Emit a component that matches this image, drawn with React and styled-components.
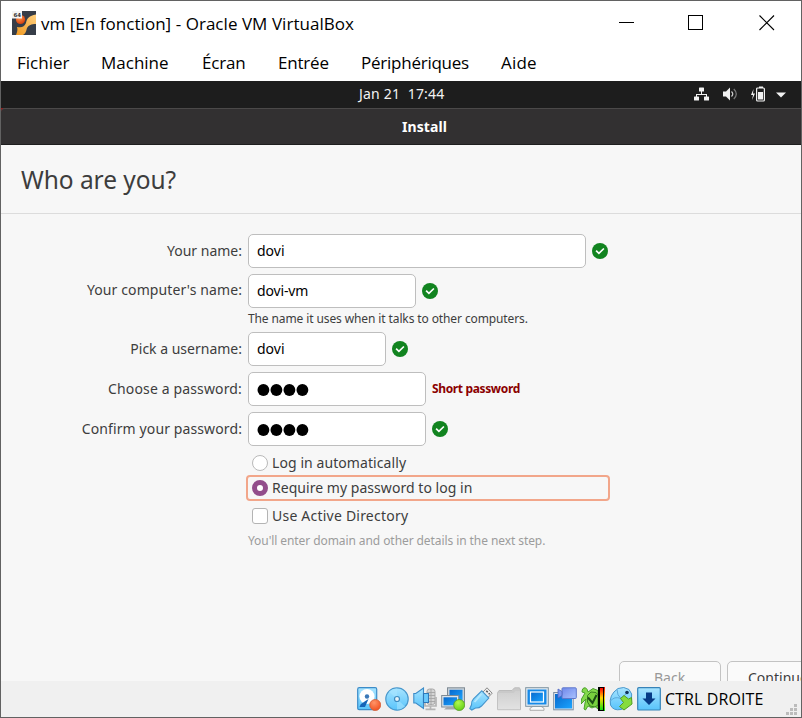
import React from 'react';
import styled, { createGlobalStyle } from 'styled-components';

const GlobalStyle = createGlobalStyle`
  *, *::before, *::after { box-sizing: border-box; }
  body { margin: 0; background: #fff; }
`;

const guestFont = '"Noto Sans", sans-serif';
const hostFont = '"Open Sans", sans-serif';

const Window = styled.div`
  width: 802px;
  height: 718px;
  display: flex;
  flex-direction: column;
  overflow: hidden;
  border: 1px solid #626262;
  background: #fff;
  font-family: ${hostFont};
  color: #000;
`;

const TitleBar = styled.header`
  flex: none;
  height: 42px;
  display: flex;
  align-items: center;
  padding-left: 11px;
`;

const Logo = styled.svg`
  display: block;
  width: 24px;
  height: 24px;
  margin-top: 1px;
`;

const Title = styled.h1`
  margin: 0 auto 0 5px;
  font-size: 17px;
  font-weight: 400;
  line-height: 24px;
  letter-spacing: 0.04px;
  padding-top: 3px;
  white-space: nowrap;
`;

const WindowControls = styled.div`
  display: flex;
  padding: 2px 26px 0 0;
`;

const ControlIcon = styled.svg`
  display: block;
  width: 17px;
  height: 17px;
  margin-left: ${(p) => p.$gap || 0}px;
`;

const MenuBar = styled.nav`
  flex: none;
  height: 38px;
  display: grid;
  grid-template-columns: 84px 101px 76px 83px 140px auto;
  padding: 8px 0 0 16px;
  font-size: 17px;
  line-height: 24px;
`;

const MenuItem = styled.span`
  letter-spacing: ${(p) => p.$tracking || 0}px;
  white-space: nowrap;
`;

const Guest = styled.main`
  flex: none;
  height: 600px;
  overflow: hidden;
  display: flex;
  flex-direction: column;
  background: #f7f7f7;
  font-family: ${guestFont};
  font-size: 14px;
  color: #3d3d3d;
`;

const TopPanel = styled.div`
  flex: none;
  height: 27px;
  display: grid;
  grid-template-columns: 358px 1fr auto;
  align-items: center;
  padding-right: 14px;
  background: #1d1d1d;
  color: #f2f2f2;
`;

const Clock = styled.time`
  grid-column: 2;
  white-space: pre;
  line-height: 20px;
  padding-bottom: 2px;
  letter-spacing: 0.18px;
`;

const TrayIcon = styled.svg`
  display: block;
  width: 93px;
  height: 17px;
`;

const Desktop = styled.div`
  flex: none;
  background: #9a1c1c;
`;

const InstallerTitle = styled.div`
  height: 37px;
  background: #323031;
  border-top: 1px solid #4b4949;
  border-bottom: 1px solid #1e1e1e;
  border-top-left-radius: 4px;
  color: #fff;
  font-weight: 700;
  line-height: 36px;
  padding-left: 401px;
  letter-spacing: 0.1px;
`;

const PageHeading = styled.h2`
  flex: none;
  margin: 0;
  height: 69px;
  padding-left: 20px;
  border-bottom: 1px solid #dcdcdc;
  font-size: 24.5px;
  font-weight: 400;
  line-height: 69px;
  letter-spacing: -0.05px;
`;

const Form = styled.form`
  flex: 1;
  padding-top: 20px;
`;

const Row = styled.div`
  height: 34px;
  margin-bottom: ${(p) => (p.$last ? 0 : 6)}px;
  display: grid;
  grid-template-columns: 241px auto auto 1fr;
  column-gap: 6px;
  align-items: center;
`;

const Label = styled.label`
  text-align: right;
  white-space: nowrap;
  letter-spacing: ${(p) => p.$tracking || 0}px;
  line-height: 20px;
  padding-bottom: ${(p) => p.$lift || 0}px;
`;

const Field = styled.div`
  width: ${(p) => p.$width}px;
  height: 34px;
  display: flex;
  align-items: center;
  padding: 0 0 2px 8px;
  border: 1px solid #bebebe;
  border-radius: 5px;
  background: #fff;
  color: #000;
  letter-spacing: ${(p) => p.$tracking || 0}px;
`;

const Dots = styled.svg`
  display: block;
  width: 53px;
  height: 12px;
  margin-top: 3px;
`;

const Check = styled.svg`
  display: block;
  width: 16px;
  height: 16px;
`;

const Warning = styled.strong`
  font-size: 12px;
  letter-spacing: -0.36px;
  line-height: 16px;
  color: #8b0000;
`;

const Note = styled.p`
  margin: 0 0 0 247px;
  height: ${(p) => p.$height}px;
  padding-top: ${(p) => p.$drop}px;
  font-size: 12px;
  line-height: 16px;
  letter-spacing: ${(p) => p.$tracking}px;
  white-space: nowrap;
  color: ${(p) => (p.$dim ? '#9c9c9c' : '#3d3d3d')};
`;

const Options = styled.div`
  margin: 4px 0 0 245px;
  width: 364px;
`;

const Option = styled.div`
  height: ${(p) => p.$height || 26}px;
  display: flex;
  align-items: center;
  gap: 4px;
  padding-left: 4px;
  border: 2px solid ${(p) => (p.$focused ? '#f2a68a' : 'transparent')};
  border-radius: 4px;
  white-space: nowrap;
`;

const OptionText = styled.span`
  line-height: 20px;
  letter-spacing: ${(p) => p.$tracking || 0}px;
`;

const Radio = styled.span`
  width: 16px;
  height: 16px;
  border-radius: 50%;
  border: ${(p) => (p.$on ? '5px solid #924d8b' : '1px solid #b9b9b9')};
  background: #fff;
`;

const Checkbox = styled.span`
  width: 16px;
  height: 16px;
  border-radius: 3px;
  border: 1px solid #b4b4b4;
  background: #fff;
`;

const WizardActions = styled.div`
  flex: none;
  height: 20px;
  display: flex;
  gap: 6px;
  padding-left: 618px;
`;

const WizardButton = styled.div`
  flex: none;
  width: 102px;
  height: 34px;
  border: 1px solid #c3c3c3;
  border-radius: 5px;
  background: #fafafa;
  color: ${(p) => (p.$disabled ? '#989898' : '#3d3d3d')};
  line-height: 32px;
  padding-left: ${(p) => (p.$disabled ? 34 : 20)}px;
`;

const StatusBar = styled.footer`
  flex: 1;
  display: flex;
  align-items: flex-start;
  padding: 6px 4px 0 356px;
  background: #f0f0f0;
`;

const Devices = styled.div`
  display: flex;
  gap: 4px;
`;

const DeviceIcon = styled.svg`
  display: block;
  width: 24px;
  height: 24px;
`;

const HostKey = styled.span`
  margin: 0 auto 0 4px;
  font-size: 16px;
  line-height: 24px;
  letter-spacing: 0.1px;
`;

const Grip = styled.svg`
  display: block;
  width: 11px;
  height: 11px;
  margin-top: 17px;
`;

const AppLogo = () => (
  <Logo viewBox="0 0 24 24">
    <defs>
      <linearGradient id="bone" x1="0" y1="1" x2="1" y2="0">
        <stop offset="0" stopColor="#f09a22" />
        <stop offset="1" stopColor="#ffd080" />
      </linearGradient>
      <radialGradient id="ball" cx=".4" cy=".3" r=".7">
        <stop offset="0" stopColor="#ff9a50" />
        <stop offset="1" stopColor="#d8400c" />
      </radialGradient>
    </defs>
    <rect width="24" height="24" fill="#363d48" />
    <path d="M4 24c1-3 2-5 1-8 5 1 7 0 9-4 1-5 3-7 10-8.500v9.500c-5 0-7 1-9 4-1 4-2 6-4 7z" fill="url(#bone)" />
    <circle cx="8.5" cy="8.5" r="4.600" fill="url(#ball)" />
    <rect width="10" height="7.500" fill="#f4f4f4" />
    <text x="1.400" y="6" fontFamily="DejaVu Sans" fontWeight="700" fontSize="5.500" fill="#333">64</text>
  </Logo>
);

const Ok = () => (
  <Check viewBox="0 0 16 16">
    <circle cx="8" cy="8" r="8" fill="#128420" />
    <path d="M4.100 7.700l2.800 2.700 5-4.900" fill="none" stroke="#fff" strokeWidth="1.700" />
  </Check>
);

const PasswordDots = () => (
  <Dots viewBox="0 0 53 12">
    {[6.4, 19.4, 32.4, 45.4].map((x) => (
      <circle key={x} cx={x} cy="6" r="5.900" fill="#000" />
    ))}
  </Dots>
);

const StatusIcons = () => (
  <TrayIcon viewBox="0 0 93 17" fill="#f2f2f2">
    <rect x="5" y="1.500" width="5" height="4" rx=".6" />
    <path d="M7 5h1v3h5v3h-1V9H3v2H2V8h5z" />
    <rect x="0" y="10.500" width="5" height="4" rx=".6" />
    <rect x="10" y="10.500" width="5" height="4" rx=".6" />
    <path d="M29 5.500h3l4-4v13l-4-4h-3z" />
    <path d="M37.500 5.500q2.500 2.500 0 5" fill="none" stroke="#d0d0d0" strokeWidth="1.200" />
    <path d="M39.800 3q5 5 0 10" fill="none" stroke="#777" strokeWidth="1.300" />
    <path d="M59.500 3L57 9h2l-1 5 3-6.500h-2z" />
    <path d="M65 .500h4v1.500h-4z" />
    <rect x="62.600" y="2" width="7.800" height="13" rx="1" fill="none" stroke="#f2f2f2" strokeWidth="1.200" />
    <rect x="64" y="6" width="5" height="7.500" />
    <path d="M82 6.500h10l-5 5z" />
  </TrayIcon>
);

const Defs = () => (
  <defs>
    <linearGradient id="sky" x1="0" y1="0" x2="0" y2="1">
      <stop offset="0" stopColor="#a8e4ff" />
      <stop offset="1" stopColor="#58c4fb" />
    </linearGradient>
    <linearGradient id="screen" x1="0" y1="0" x2="1" y2="1">
      <stop offset="0" stopColor="#0868cc" />
      <stop offset="1" stopColor="#1ba4ff" />
    </linearGradient>
    <linearGradient id="grey" x1="0" y1="0" x2="0" y2="1">
      <stop offset="0" stopColor="#cfcfcf" />
      <stop offset="1" stopColor="#e2e2e2" />
    </linearGradient>
    <linearGradient id="cam" x1="0" y1="0" x2="1" y2="1">
      <stop offset="0" stopColor="#6f87ea" />
      <stop offset="1" stopColor="#a9c3ff" />
    </linearGradient>
    <linearGradient id="load" x1="0" y1="0" x2="0" y2="1">
      <stop offset="0" stopColor="#f00" />
      <stop offset=".45" stopColor="#ffd800" />
      <stop offset="1" stopColor="#10e010" />
    </linearGradient>
    <radialGradient id="red" cx=".4" cy=".3" r=".8">
      <stop offset="0" stopColor="#ff9468" />
      <stop offset="1" stopColor="#f04a18" />
    </radialGradient>
    <radialGradient id="green" cx=".4" cy=".3" r=".8">
      <stop offset="0" stopColor="#b0f850" />
      <stop offset="1" stopColor="#5ccc10" />
    </radialGradient>
  </defs>
);

const HardDisk = () => (
  <DeviceIcon viewBox="0 0 24 24">
    <Defs />
    <rect x=".7" y=".7" width="19" height="22" rx="1.5" fill="url(#sky)" stroke="#3c8cc8" strokeWidth="1.2" />
    <circle cx="10" cy="9.5" r="7.6" fill="#fff" />
    <circle cx="10" cy="9.5" r="2.2" fill="#3a78b8" />
    <path d="M11.500 12L8 20H2.500l1.200-2.700q4-3 7.800-5.300z" fill="#1565b8" />
    <circle cx="18.2" cy="18" r="5.5" fill="url(#red)" stroke="#d06038" strokeWidth=".8" />
  </DeviceIcon>
);

const Disc = () => (
  <DeviceIcon viewBox="0 0 24 24">
    <circle cx="12" cy="12" r="11.2" fill="url(#sky)" stroke="#4a98cc" strokeWidth="1.2" />
    <path d="M12 12L4 4.500A11 11 0 0 1 12 1.500zM12 12l8 7.500A11 11 0 0 1 12 22.500z" fill="#a7e5ff" opacity=".6" />
    <circle cx="12" cy="12" r="2.5" fill="#e7f3f8" stroke="#3d8bc0" strokeWidth="1.2" />
  </DeviceIcon>
);

const Audio = () => (
  <DeviceIcon viewBox="0 0 24 24">
    <rect x="14" y="2" width="8" height="15.500" rx="2.5" fill="#d4d4d4" stroke="#aaa" />
    <path d="M14 5.500h8M14 8.500h8M14 11.500h8M14 14.500h8M18 2v15" stroke="#a4a4a4" strokeWidth=".9" />
    <path d="M12 15v4h11v-9M17.500 19v3m-5 .3h10" fill="none" stroke="#b4b4b4" strokeWidth="1.7" />
    <path d="M.800 6.500h2L10.500 1v20.500L2.800 16h-2z" fill="url(#sky)" stroke="#3c8cc8" strokeWidth="1.1" />
    <path d="M10.500 6.500H15.500v9h-5z" fill="#6bcafc" stroke="#2f78b8" strokeWidth="1.1" />
  </DeviceIcon>
);

const Network = () => (
  <DeviceIcon viewBox="0 0 24 24">
    <rect x="6.500" y=".8" width="17" height="14.500" fill="#c8d0d8" stroke="#7e8a94" />
    <rect x="8.500" y="2.800" width="13" height="10.500" fill="url(#screen)" />
    <rect x=".7" y="8.500" width="17" height="11.500" fill="#dce4ea" stroke="#7e8a94" />
    <rect x="2.500" y="10.300" width="13.500" height="8" fill="url(#screen)" />
    <path d="M3 22.500h12l-2-2.500H6z" fill="#a4a8ac" />
    <circle cx="18.200" cy="18" r="5.500" fill="url(#green)" stroke="#559828" strokeWidth=".8" />
  </DeviceIcon>
);

const Usb = () => (
  <DeviceIcon viewBox="0 0 24 24">
    <path d="M13.500 5.500L18 .8l5.200 5.400-4.700 4.800z" fill="#eee" stroke="#888" />
    <path d="M17.300 3.800l1.400 1.400M19.700 6.200l1 1" stroke="#555" strokeWidth="1.600" />
    <path d="M12.800 3.800l7 7.200-7.300 8q-2.300 2.300-6 2L2.800 23 .8 21.500l1.700-3.700q-.4-3.500 2-6z" fill="url(#sky)" stroke="#4394cc" strokeWidth="1.100" />
    <path d="M12.500 7l-7 8" stroke="#b4e8ff" strokeWidth="1.800" />
  </DeviceIcon>
);

const Folder = () => (
  <DeviceIcon viewBox="0 0 24 24">
    <path d="M.700 5.500L2 3.500h13L17.500.800h5L23.500 3v19.700H.700z" fill="#c9c9c9" stroke="#bcbcbc" />
    <path d="M1 6h15.500l2-2H23v18.300H1z" fill="url(#grey)" />
  </DeviceIcon>
);

const Display = () => (
  <DeviceIcon viewBox="0 0 24 24">
    <path d="M5 23.300v-2l3-2h8l3 2v2z" fill="#fafafa" stroke="#999" strokeWidth=".8" />
    <rect x=".700" y=".700" width="22.600" height="18.600" fill="#e4edf3" stroke="#7d929f" />
    <rect x="2.500" y="2.500" width="19" height="15" fill="#168ae8" />
    <rect x="5.500" y="5" width="13" height="10" fill="url(#screen)" stroke="#fff" strokeWidth="1.200" />
  </DeviceIcon>
);

const Recorder = () => (
  <DeviceIcon viewBox="0 0 24 24">
    <rect x=".700" y="5.500" width="19.500" height="17.300" fill="#e5eaf0" stroke="#7d8ea0" />
    <rect x="2" y="7" width="17" height="14.500" fill="url(#screen)" />
    <rect x="9" y=".800" width="14.300" height="10.700" rx="1" fill="url(#cam)" stroke="#6078cc" />
    <path d="M9 4.500L5 2v9l4-2.500z" fill="#7e96f0" stroke="#5068c0" strokeWidth=".8" />
  </DeviceIcon>
);

const Turtle = () => (
  <DeviceIcon viewBox="0 0 24 24">
    <path d="M1 5Q1 .500 4.500.800 6.500 2 7 5l5-3.500 5 2V22l-3-2.500-3 1.500-4-2-2.500 4-1.500-1 1-6 1-4-3 3-2 2 .500-5L4 6z" fill="#83d94c" stroke="#3f9820" strokeWidth=".9" />
    <path d="M6.500 8.500L10 5l5 .500 2 2.500v10l-3 2-5-1-2.500-4z" fill="#78d03e" stroke="#397f20" />
    <path d="M7 10.500l4.500 5.500 4-8" fill="none" stroke="#1b4c14" strokeWidth="2" />
    <rect x="17" width="7" height="24" fill="#000" />
    <rect x="19" y="1" width="3" height="22" fill="url(#load)" />
    <rect x="23" width="1" height="24" fill="url(#load)" />
  </DeviceIcon>
);

const Mouse = () => (
  <DeviceIcon viewBox="0 0 24 24">
    <path d="M9 1.500Q15-1 20 2.500q4 4 2.500 10Q20 20 12 22.500 4 24 1.500 18-.500 8 9 1.500z" fill="url(#sky)" stroke="#4a98cc" />
    <path d="M8 2.500q0 6 4 9Q5 9 1.500 14M12 11.500q3-3 6-5.500" fill="none" stroke="#5ba8da" />
    <circle cx="18" cy="5.500" r="1.800" fill="#12345c" />
    <path d="M11.500 11.500L15 8.500l4.500 3.500 3-1.500.500 6.500-8 6-4.500-3.500 4-4z" fill="#86dc3c" stroke="#509e22" />
  </DeviceIcon>
);

const KeyCapture = () => (
  <DeviceIcon viewBox="0 0 24 24">
    <rect x=".700" y=".700" width="22.600" height="22.300" rx="1" fill="url(#sky)" stroke="#3783b8" strokeWidth="1.200" />
    <path d="M9 5.500h6v6h3.500L12 18l-6.500-6.500H9z" fill="#063b86" />
  </DeviceIcon>
);

export default function App() {
  return (
    <>
      <GlobalStyle />
      <Window>
        <TitleBar>
          <AppLogo />
          <Title>vm [En fonction] - Oracle VM VirtualBox</Title>
          <WindowControls>
            <ControlIcon viewBox="0 0 17 17">
              <path d="M1 7.500h15" stroke="#000" />
            </ControlIcon>
            <ControlIcon viewBox="0 0 17 17" $gap={52}>
              <rect x="1.500" y=".500" width="14" height="14" fill="none" stroke="#000" />
            </ControlIcon>
            <ControlIcon viewBox="0 0 17 17" $gap={54}>
              <path d="M1.500 .500l14.500 14.500M16 .500L1.500 15" stroke="#000" strokeWidth="1.100" />
            </ControlIcon>
          </WindowControls>
        </TitleBar>
        <MenuBar>
          <MenuItem>Fichier</MenuItem>
          <MenuItem>Machine</MenuItem>
          <MenuItem $tracking={-0.2}>Écran</MenuItem>
          <MenuItem $tracking={-0.2}>Entrée</MenuItem>
          <MenuItem $tracking={-0.24}>Périphériques</MenuItem>
          <MenuItem $tracking={0.2}>Aide</MenuItem>
        </MenuBar>

        <Guest>
          <TopPanel>
            <Clock>Jan 21{'  '}17:44</Clock>
            <StatusIcons />
          </TopPanel>
          <Desktop>
            <InstallerTitle>Install</InstallerTitle>
          </Desktop>
          <PageHeading>Who are you?</PageHeading>
          <Form>
            <Row>
              <Label>Your name:</Label>
              <Field $width={338}>dovi</Field>
              <Ok />
            </Row>
            <Row $last>
              <Label $tracking={0.1} $lift={2}>Your computer's name:</Label>
              <Field $width={168} $tracking={-0.15}>dovi-vm</Field>
              <Ok />
            </Row>
            <Note $height={24} $drop={3} $tracking={-0.11}>
              The name it uses when it talks to other computers.
            </Note>
            <Row>
              <Label>Pick a username:</Label>
              <Field $width={138}>dovi</Field>
              <Ok />
            </Row>
            <Row>
              <Label $tracking={0.14}>Choose a password:</Label>
              <Field $width={178}><PasswordDots /></Field>
              <Warning>Short password</Warning>
            </Row>
            <Row $last>
              <Label $tracking={0.11}>Confirm your password:</Label>
              <Field $width={178}><PasswordDots /></Field>
              <Ok />
            </Row>
            <Options>
              <Option $height={25}>
                <Radio />
                <OptionText $tracking={0.08}>Log in automatically</OptionText>
              </Option>
              <Option $focused>
                <Radio $on />
                <OptionText $tracking={0.04}>Require my password to log in</OptionText>
              </Option>
              <Option $height={30}>
                <Checkbox />
                <OptionText $tracking={0.22}>Use Active Directory</OptionText>
              </Option>
            </Options>
            <Note $height={20} $drop={2} $tracking={-0.08} $dim>
              You'll enter domain and other details in the next step.
            </Note>
          </Form>
          <WizardActions>
            <WizardButton $disabled>Back</WizardButton>
            <WizardButton>Continue</WizardButton>
          </WizardActions>
        </Guest>

        <StatusBar>
          <Devices>
            <HardDisk />
            <Disc />
            <Audio />
            <Network />
            <Usb />
            <Folder />
            <Display />
            <Recorder />
            <Turtle />
            <Mouse />
            <KeyCapture />
          </Devices>
          <HostKey>CTRL DROITE</HostKey>
          <Grip viewBox="0 0 11 11" fill="#bcbcbc">
            <path d="M8 0h3v3H8zM8 4h3v3H8zM4 4h3v3H4zM8 8h3v3H8zM4 8h3v3H4zM0 8h3v3H0z" />
          </Grip>
        </StatusBar>
      </Window>
    </>
  );
}
